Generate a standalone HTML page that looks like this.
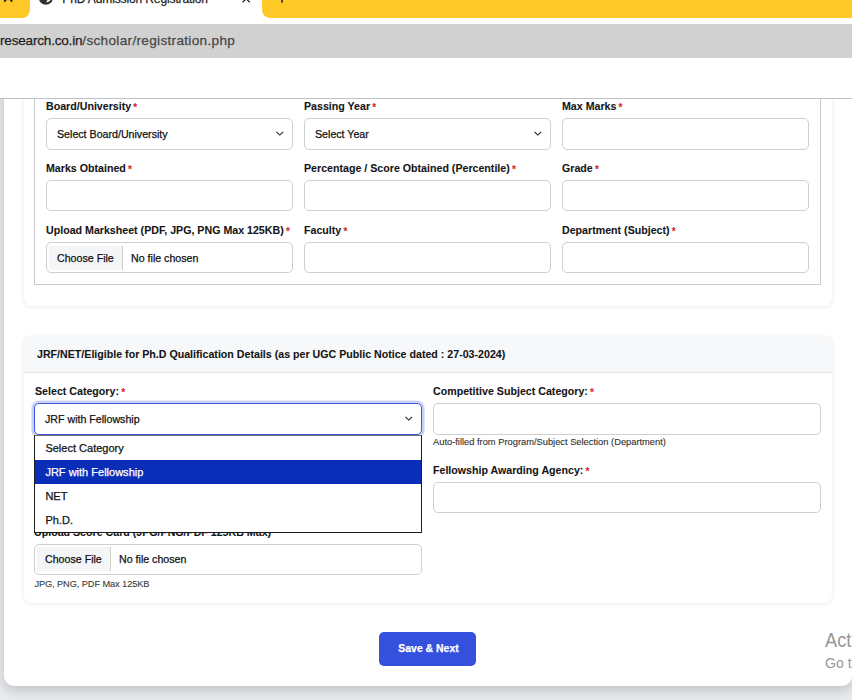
<!DOCTYPE html>
<html lang="en">
<head>
<meta charset="utf-8">
<title>PhD Admission Registration</title>
<style>
*{box-sizing:border-box;margin:0;padding:0}
html,body{width:852px;height:700px;overflow:hidden}
body{-webkit-text-stroke:0.25px currentColor;background:#e9ebef;font-family:"Liberation Sans",Arial,sans-serif;color:#111;position:relative;font-size:10.65px}
.abs{position:absolute}
#outer{left:4px;top:58px;width:848px;height:628px;background:#fff;border-radius:0 0 10px 10px;box-shadow:0 4px 12px rgba(50,55,65,.25)}
#card1{left:24px;top:90px;width:808px;height:216px;background:#fff;border-radius:0 0 8px 8px;box-shadow:0 1px 5px rgba(0,0,0,.09)}
#fs{left:34px;top:90px;width:787px;height:195px;border:1px solid #c9cdd3;border-top:none}
#card2{left:24px;top:336px;width:808px;height:267px;background:#fff;border-radius:8px;box-shadow:0 1px 5px rgba(0,0,0,.09)}
#card2h{left:24px;top:336px;width:808px;height:37px;background:#f7f8fa;border-bottom:1px solid #e3e5e9;border-radius:6px 6px 0 0}
#chrome-white{left:0;top:0;width:852px;height:99px;background:#fff}
#topline{left:0;top:98px;width:852px;height:1px;background:#bfc1c5}
#tabbar{left:0;top:0;width:852px;height:18px;background:#fff}
.ytab{background:#ffca28;top:0;height:18px}
#urlbar{left:0;top:24px;width:852px;height:34px;background:#d1d1d1}
#url{left:0;top:33.1px;font-size:13.6px;line-height:16px;color:#1f1f1f;white-space:nowrap;letter-spacing:-0.22px}
#url span{color:#474747;letter-spacing:0.31px}
.lbl{-webkit-text-stroke:0.08px currentColor;font-weight:bold;font-size:10.65px;line-height:13px;white-space:nowrap;color:#151515}
.lbl i{font-style:normal;color:#dc1f2e;font-size:10px;position:relative;top:1px;font-weight:bold;margin-left:-0.8px}
.inp{height:31px;border:1px solid #cfcfcf;border-radius:5px;background:#fff;font-size:10.65px;line-height:29px;padding-left:10px;white-space:nowrap;color:#111}
.sel32{height:32px;line-height:30px}
.chev{position:absolute;right:8.3px;top:12px;width:8px;height:5px}
.file .btn{position:absolute;left:2px;top:3px;height:24px;width:74px;background:#f4f5f7;border-right:1px solid #cfcfcf;padding-left:8px;line-height:25px}
.file .nf{position:absolute;left:84px;top:1px}
.small{-webkit-text-stroke:0.1px currentColor;font-size:9.32px;line-height:11px;color:#3a3a3a;white-space:nowrap}
#dd{left:34px;top:435px;width:388px;height:98px;background:#fff;border:1px solid #1c1c1c;border-top-color:#6d6d6d}
#dd div{height:24px;line-height:24px;padding-left:10.4px;font-size:11.02px;white-space:nowrap;color:#111}
#dd div.sel{background:#0a2eb8;color:#fff}
#btn{left:379px;top:632px;width:97px;height:34px;background:#3450dc;border-radius:5px;color:#fff;font-weight:bold;font-size:10.45px;line-height:34px;text-align:center;padding-left:2px}
#wm1{transform:scaleX(.91);transform-origin:0 0;-webkit-text-stroke:0;left:825.4px;top:628.1px;font-size:20px;line-height:24px;color:#979797;white-space:nowrap}
#wm2{transform:scaleX(.92);transform-origin:0 0;-webkit-text-stroke:0;left:825.2px;top:653.5px;font-size:15.3px;line-height:18px;color:#979797;white-space:nowrap}
</style>
</head>
<body>
<div class="abs" id="outer"></div>
<div class="abs" id="card1"></div>
<div class="abs" id="fs"></div>
<div class="abs" id="chrome-white"></div>
<div class="abs" id="topline"></div>

<!-- browser chrome -->
<div class="abs ytab" style="left:0;width:30px;border-radius:0 0 8px 0"></div>
<div class="abs ytab" style="left:262px;width:590px;border-radius:0 0 0 8px"></div>
<div class="abs" id="tabtitle" style="left:62.3px;top:-8.4px;font-size:12px;line-height:15px;letter-spacing:-0.12px;color:#1f1f1f;white-space:nowrap">PhD Admission Registration</div>
<svg class="abs" style="left:0;top:0" width="300" height="18" viewBox="0 0 300 18">
<g stroke="#202020" stroke-width="1.7" fill="none" stroke-linecap="butt"><path d="M4.1 -6.6L12.3 1.6M12.3 -6.6L4.1 1.6"/></g>
<g stroke="#2a2a2a" stroke-width="1.3" fill="none"><path d="M242.5 -4.5L249.8 2.2M249.8 -4.5L242.5 2.2"/></g>
<path d="M282 -6V2.8" stroke="#202020" stroke-width="1.5" fill="none"/>
<circle cx="45.85" cy="-2.35" r="7.05" fill="#2f3237"/>
<path d="M50.3 -1C50.3 1.3 48.4 2.5 45.9 2.1C47.3 1.4 47.5 0.2 47 -1Z" fill="#fff"/>
</svg>
<div class="abs" id="urlbar"></div>
<div class="abs" id="url">research.co.in<span>/scholar/registration.php</span></div>

<!-- row 1 -->
<div class="abs lbl" style="left:46px;top:100px">Board/University <i>*</i></div>
<div class="abs lbl" style="left:304px;top:100px">Passing Year <i>*</i></div>
<div class="abs lbl" style="left:562px;top:100px">Max Marks <i>*</i></div>
<div class="abs inp sel32" style="left:46px;top:118px;width:247px">Select Board/University<svg class="chev" viewBox="0 0 8 5"><path d="M0.5 0.9L3.8 4.1L7.1 0.9" fill="none" stroke="#222" stroke-width="1.05"/></svg></div>
<div class="abs inp sel32" style="left:304px;top:118px;width:247px">Select Year<svg class="chev" viewBox="0 0 8 5"><path d="M0.5 0.9L3.8 4.1L7.1 0.9" fill="none" stroke="#222" stroke-width="1.05"/></svg></div>
<div class="abs inp sel32" style="left:562px;top:118px;width:247px"></div>

<!-- row 2 -->
<div class="abs lbl" style="left:46px;top:162px">Marks Obtained <i>*</i></div>
<div class="abs lbl" style="left:304px;top:162px">Percentage / Score Obtained (Percentile) <i>*</i></div>
<div class="abs lbl" style="left:562px;top:162px">Grade <i>*</i></div>
<div class="abs inp" style="left:46px;top:180px;width:247px"></div>
<div class="abs inp" style="left:304px;top:180px;width:247px"></div>
<div class="abs inp" style="left:562px;top:180px;width:247px"></div>

<!-- row 3 -->
<div class="abs lbl" style="left:46px;top:224px">Upload Marksheet (PDF, JPG, PNG Max 125KB) <i>*</i></div>
<div class="abs lbl" style="left:304px;top:224px">Faculty <i>*</i></div>
<div class="abs lbl" style="left:562px;top:224px">Department (Subject) <i>*</i></div>
<div class="abs inp file" style="left:46px;top:242px;width:247px;padding:0"><span class="btn">Choose File</span><span class="nf">No file chosen</span></div>
<div class="abs inp" style="left:304px;top:242px;width:247px"></div>
<div class="abs inp" style="left:562px;top:242px;width:247px"></div>

<!-- card 2 -->
<div class="abs" id="card2"></div>
<div class="abs" id="card2h"></div>
<div class="abs lbl" style="left:37px;top:348px">JRF/NET/Eligible for Ph.D Qualification Details (as per UGC Public Notice dated : 27-03-2024)</div>

<div class="abs lbl" style="left:35px;top:385px">Select Category: <i>*</i></div>
<div class="abs lbl" style="left:433px;top:385px">Competitive Subject Category: <i>*</i></div>
<div class="abs inp sel32" style="left:34px;top:403px;width:388px;border-color:#3f58df;box-shadow:0 0 0 2.6px rgba(63,88,223,.28)">JRF with Fellowship<svg class="chev" viewBox="0 0 8 5"><path d="M0.5 0.9L3.8 4.1L7.1 0.9" fill="none" stroke="#222" stroke-width="1.05"/></svg></div>
<div class="abs inp sel32" style="left:433px;top:403px;width:388px"></div>
<div class="abs small" style="left:433px;top:437.3px;color:#2e2e2e">Auto-filled from Program/Subject Selection (Department)</div>
<div class="abs lbl" style="left:433px;top:464px">Fellowship Awarding Agency: <i>*</i></div>
<div class="abs inp" style="left:433px;top:482px;width:388px"></div>

<div class="abs lbl" style="left:34px;top:526px">Upload Score Card (JPG/PNG/PDF 125KB Max)</div>
<div class="abs inp file" style="left:34px;top:544px;width:388px;padding:0"><span class="btn" style="top:2px">Choose File</span><span class="nf" style="top:0">No file chosen</span></div>
<div class="abs small" style="left:34.4px;top:578.8px;letter-spacing:-0.13px">JPG, PNG, PDF Max 125KB</div>

<div class="abs" id="dd"><div>Select Category</div><div class="sel">JRF with Fellowship</div><div>NET</div><div>Ph.D.</div></div>

<div class="abs" id="btn">Save &amp; Next</div>
<div class="abs" id="wm1">Activate Windows</div>
<div class="abs" id="wm2">Go to Settings to activate Windows.</div>
</body>
</html>
